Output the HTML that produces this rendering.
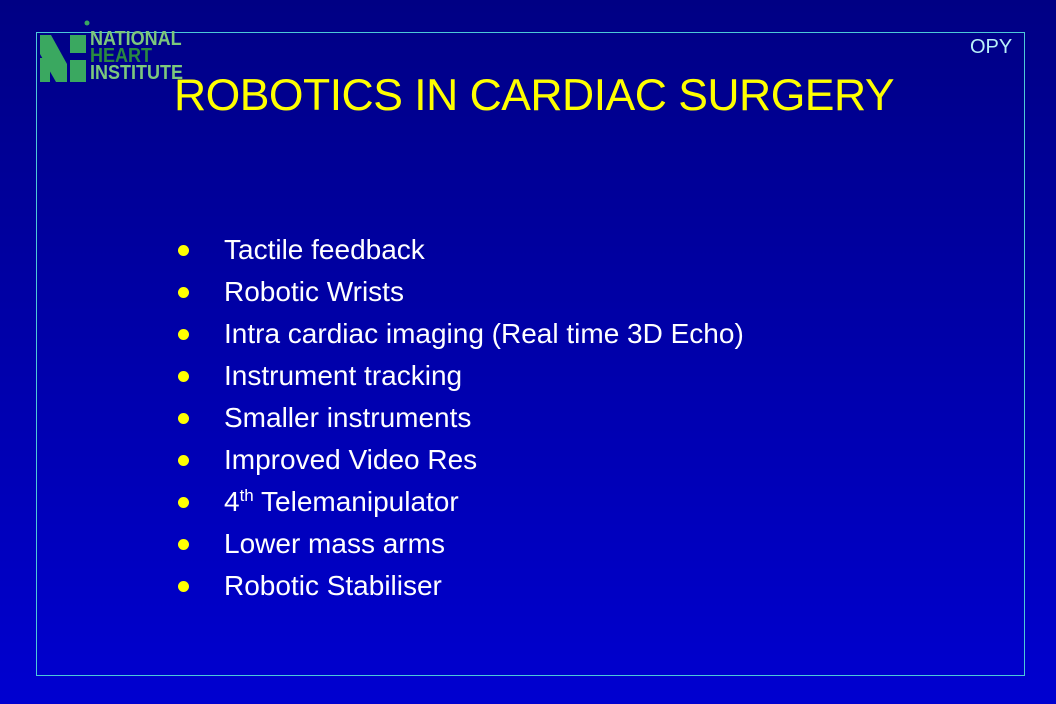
<!DOCTYPE html>
<html><head><style>
body{margin:0;width:1056px;height:704px;overflow:hidden;background:linear-gradient(#000084,#0000d0);font-family:"Liberation Sans",sans-serif;position:relative}
.b{position:absolute;left:36px;top:32px;width:987px;height:642px;border:1px solid #4cc8d8}
h1{position:absolute;left:0;width:1068px;top:71px;margin:0;text-align:center;font-weight:normal;font-size:44.5px;color:#ffff00;letter-spacing:-0.5px}
.opy{position:absolute;left:970px;top:36px;font-size:20px;color:#b8f0f8}
ul{position:absolute;left:176px;top:232px;margin:0;padding:0;list-style:none}
li{height:42px;font-size:28px;color:#fff;position:relative;padding-left:48px;line-height:36px;white-space:nowrap;letter-spacing:0px}
li:before{content:"";position:absolute;left:2px;top:13px;width:11px;height:11px;border-radius:50%;background:#ffff00}
sup{font-size:17px;line-height:0;vertical-align:0;position:relative;top:-10px}
.lg{position:absolute;left:90px;top:31px;font-weight:bold;font-size:20px;line-height:17px;color:#7cc87c;transform:scaleX(0.9);transform-origin:0 0}
</style></head><body>
<div class="b"></div>
<svg style="position:absolute;left:40px;top:18px" width="50" height="66">
<circle cx="47" cy="5" r="2.5" fill="#3aa860"/>
<polygon points="0,17 11,17 27,46 27,64 16,64 0,36" fill="#3aa860"/>
<rect x="0" y="40" width="10" height="24" fill="#3aa860"/>
<rect x="30" y="17" width="16" height="18" fill="#3aa860"/>
<rect x="30" y="42" width="16" height="22" fill="#3aa860"/>
</svg>
<div class="lg">NATIONAL<br><span style="color:#2a8a40">HEART</span><br>INSTITUTE</div>
<div class="opy">OPY</div>
<h1>ROBOTICS IN CARDIAC SURGERY</h1>
<ul>
<li>Tactile feedback</li>
<li>Robotic Wrists</li>
<li>Intra cardiac imaging (Real time 3D Echo)</li>
<li>Instrument tracking</li>
<li>Smaller instruments</li>
<li>Improved Video Res</li>
<li>4<sup>th</sup> Telemanipulator</li>
<li>Lower mass arms</li>
<li>Robotic Stabiliser</li>
</ul>
</body></html>
